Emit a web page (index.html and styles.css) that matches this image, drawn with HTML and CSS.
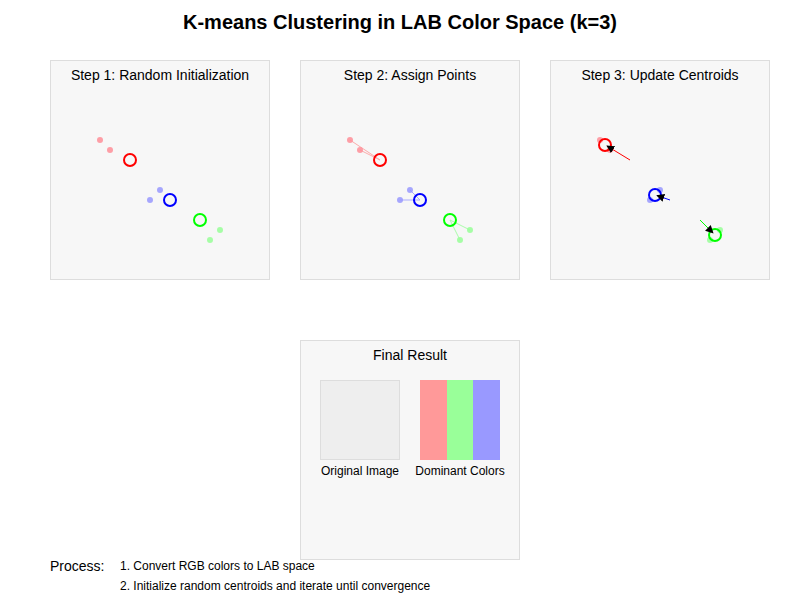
FILE: index.html
```html
<!DOCTYPE html>
<html lang="en">
<head>
<meta charset="utf-8">
<title>K-means Clustering in LAB Color Space</title>
<link rel="stylesheet" href="styles.css">
</head>
<body>
<h1 class="title">K-means Clustering in LAB Color Space (k=3)</h1>

<div class="steps">
  <div class="panel">
    <div class="panel-title">Step 1: Random Initialization</div>
    <svg class="plot" width="218" height="195" viewBox="1 24 218 195">
      <g class="pt-red"><circle cx="50" cy="80" r="3"/><circle cx="60" cy="90" r="3"/></g>
      <g class="pt-blue"><circle cx="110" cy="130" r="3"/><circle cx="100" cy="140" r="3"/></g>
      <g class="pt-green"><circle cx="170" cy="170" r="3"/><circle cx="160" cy="180" r="3"/></g>
      <circle class="c-red" cx="80" cy="100" r="6"/>
      <circle class="c-blue" cx="120" cy="140" r="6"/>
      <circle class="c-green" cx="150" cy="160" r="6"/>
    </svg>
  </div>

  <div class="panel">
    <div class="panel-title">Step 2: Assign Points</div>
    <svg class="plot" width="218" height="195" viewBox="1 24 218 195">
      <g class="ln-red"><line x1="50" y1="80" x2="80" y2="100"/><line x1="60" y1="90" x2="80" y2="100"/></g>
      <g class="ln-blue"><line x1="110" y1="130" x2="120" y2="140"/><line x1="100" y1="140" x2="120" y2="140"/></g>
      <g class="ln-green"><line x1="170" y1="170" x2="150" y2="160"/><line x1="160" y1="180" x2="150" y2="160"/></g>
      <g class="pt-red"><circle cx="50" cy="80" r="3"/><circle cx="60" cy="90" r="3"/></g>
      <g class="pt-blue"><circle cx="110" cy="130" r="3"/><circle cx="100" cy="140" r="3"/></g>
      <g class="pt-green"><circle cx="170" cy="170" r="3"/><circle cx="160" cy="180" r="3"/></g>
      <circle class="c-red" cx="80" cy="100" r="6"/>
      <circle class="c-blue" cx="120" cy="140" r="6"/>
      <circle class="c-green" cx="150" cy="160" r="6"/>
    </svg>
  </div>

  <div class="panel">
    <div class="panel-title">Step 3: Update Centroids</div>
    <svg class="plot" width="218" height="195" viewBox="1 24 218 195">
      <defs>
        <marker id="arrow" viewBox="0 0 10 10" refX="9" refY="5" markerWidth="8" markerHeight="8" markerUnits="userSpaceOnUse" orient="auto">
          <path d="M0,0 L10,5 L0,10 Z" fill="#000"/>
        </marker>
      </defs>
      <g class="pt-red"><circle cx="50" cy="80" r="3"/><circle cx="60" cy="90" r="3"/></g>
      <g class="pt-blue"><circle cx="110" cy="130" r="3"/><circle cx="100" cy="140" r="3"/></g>
      <g class="pt-green"><circle cx="170" cy="170" r="3"/><circle cx="160" cy="180" r="3"/></g>
      <circle class="c-red" cx="55" cy="85" r="6"/>
      <circle class="c-blue" cx="105" cy="135" r="6"/>
      <circle class="c-green" cx="165" cy="175" r="6"/>
      <line class="mv-red" x1="80" y1="100" x2="57" y2="86" marker-end="url(#arrow)"/>
      <line class="mv-blue" x1="120" y1="140" x2="107" y2="135.5" marker-end="url(#arrow)"/>
      <line class="mv-green" x1="150" y1="160" x2="163" y2="173" marker-end="url(#arrow)"/>
    </svg>
  </div>
</div>

<div class="panel final">
  <div class="panel-title">Final Result</div>
  <div class="result-grid">
    <div class="result-col">
      <div class="orig-box"></div>
      <div class="result-label">Original Image</div>
    </div>
    <div class="result-col">
      <div class="swatches">
        <div class="sw sw-red"></div>
        <div class="sw sw-green"></div>
        <div class="sw sw-blue"></div>
      </div>
      <div class="result-label">Dominant Colors</div>
    </div>
  </div>
</div>

<div class="process">
  <div class="process-label">Process:</div>
  <ol class="process-list">
    <li>1. Convert RGB colors to LAB space</li>
    <li>2. Initialize random centroids and iterate until convergence</li>
  </ol>
</div>
</body>
</html>
```

FILE: styles.css
```css
html, body {
  margin: 0;
  padding: 0;
  background: #ffffff;
}

body {
  width: 800px;
  height: 600px;
  overflow: hidden;
  font-family: "Liberation Sans", Arial, sans-serif;
  color: #000;
}

.title {
  margin: 0 0 26px 0;
  padding-top: 10px;
  font-size: 20px;
  line-height: 24px;
  font-weight: bold;
  text-align: center;
}

.steps {
  display: flex;
  gap: 30px;
  padding-left: 50px;
}

.panel {
  box-sizing: border-box;
  width: 220px;
  height: 220px;
  border: 1px solid #dddddd;
  background: #f7f7f7;
}

.panel-title {
  padding-top: 6px;
  font-size: 14px;
  line-height: 16px;
  height: 17px;
  text-align: center;
}

.plot {
  display: block;
}

.pt-red { fill: #ff8f99; opacity: 0.85; }
.pt-blue { fill: #9999ff; opacity: 0.85; }
.pt-green { fill: #99ff99; opacity: 0.85; }

.ln-red { stroke: #ff9999; stroke-width: 1; opacity: 0.8; }
.ln-blue { stroke: #9999ff; stroke-width: 1; opacity: 0.8; }
.ln-green { stroke: #99ff99; stroke-width: 1; opacity: 0.8; }

.c-red { fill: none; stroke: #ff0000; stroke-width: 2; }
.c-blue { fill: none; stroke: #0000ff; stroke-width: 2; }
.c-green { fill: none; stroke: #00ff00; stroke-width: 2; }

.mv-red { stroke: #ff0000; stroke-width: 1; }
.mv-blue { stroke: #0000ff; stroke-width: 1; }
.mv-green { stroke: #00ff00; stroke-width: 1; }

.final {
  margin: 60px 0 0 300px;
}

.result-grid {
  display: grid;
  grid-template-columns: 100px 100px;
  margin: 16px 0 0 9px;
  justify-items: center;
}

.result-col {
  display: flex;
  flex-direction: column;
  align-items: center;
}

.orig-box {
  box-sizing: border-box;
  width: 80px;
  height: 80px;
  background: #eeeeee;
  border: 1px solid #dddddd;
}

.swatches {
  display: flex;
  width: 80px;
  height: 80px;
}

.sw {
  flex: 1;
}

.sw-red { background: #ff9999; }
.sw-green { background: #99ff99; }
.sw-blue { background: #9999ff; }

.result-label {
  margin-top: 4px;
  font-size: 12px;
  line-height: 14px;
  white-space: nowrap;
}

.process {
  display: flex;
  margin: -1px 0 0 50px;
}

.process-label {
  width: 70px;
  font-size: 14px;
  line-height: 14px;
}

.process-list {
  margin: 0;
  padding: 0;
  list-style: none;
  display: flex;
  flex-direction: column;
  gap: 6px;
  font-size: 12px;
  line-height: 14px;
}
```
